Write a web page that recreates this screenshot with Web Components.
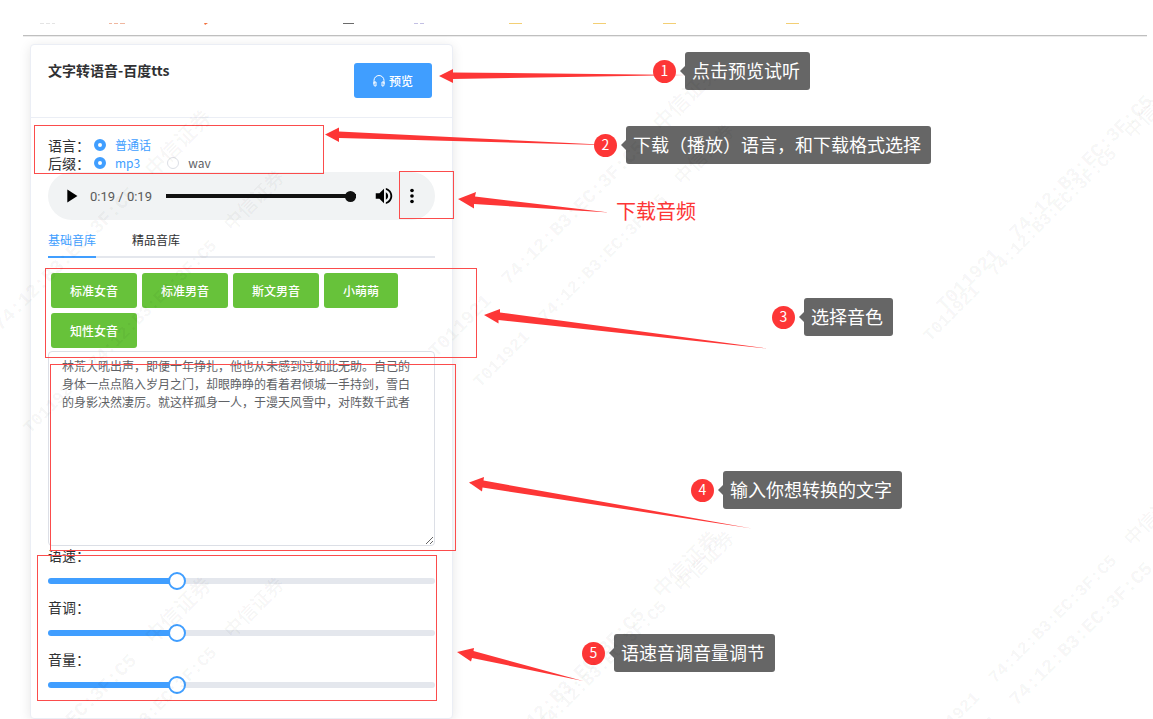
<!DOCTYPE html>
<html lang="zh-CN">
<head>
<meta charset="utf-8">
<meta name="viewport" content="width=device-width, initial-scale=1">
<title>文字转语音-百度tts</title>
<style>
  body {
    margin: 0;
    background: #fff;
    color: #303133;
    font-family: "Noto Sans CJK SC", sans-serif;
    font-size: 14px;
  }
</style>
</head>
<body>

<tts-page>
  <tts-card heading="文字转语音-百度tts">
    <tts-options></tts-options>
    <tts-player time="0:19 / 0:19"></tts-player>
    <voice-tabs tabs="基础音库,精品音库" voices="标准女音,标准男音,斯文男音,小萌萌,知性女音"></voice-tabs>
    <tts-text>林荒大吼出声，即便十年挣扎，他也从未感到过如此无助。自己的身体一点点陷入岁月之门，却眼睁睁的看着君倾城一手持剑，雪白的身影决然凄厉。就这样孤身一人，于漫天风雪中，对阵数千武者</tts-text>
    <tts-slider label="语速："></tts-slider>
    <tts-slider label="音调："></tts-slider>
    <tts-slider label="音量："></tts-slider>
  </tts-card>

  <guide-marks slot="guide"></guide-marks>
  <guide-pin slot="guide" step="1" style="left: 653px; top: 52px">点击预览试听</guide-pin>
  <guide-pin slot="guide" step="2" style="left: 594px; top: 126px">下载（播放）语言，和下载格式选择</guide-pin>
  <guide-pin slot="guide" step="3" style="left: 772px; top: 298px">选择音色</guide-pin>
  <guide-pin slot="guide" step="4" style="left: 691px; top: 471px">输入你想转换的文字</guide-pin>
  <guide-pin slot="guide" step="5" style="left: 582px; top: 634px">语速音调音量调节</guide-pin>
  <water-mark slot="guide"></water-mark>
</tts-page>

<script>
(function () {

  // ===== PAGE =====
  class TtsPage extends HTMLElement {

    constructor() {
      super();
      this.attachShadow({ mode: "open" }).innerHTML = `
        <style>
          :host {
            display: block;
            position: relative;
            min-height: 100vh;
            overflow: hidden;
            box-sizing: border-box;
            padding: 23px 6px 0 23px;
          }
          .strip {
            display: block;
            width: 100%;
            height: 12px;
          }
          main {
            border-top: 1px solid #bfbfbf;
            box-shadow: inset 0 1px #ececec;
            padding: 8px 7px 0;
          }
        </style>
        <svg class="strip" aria-hidden="true">
          <path d="M17 0.5h4m2 0h4m2 0h3" stroke="#e4e4e4"/>
          <path d="M86 0.5h3m2 0h4m2 0h5" stroke="#f0b7a0"/>
          <path d="M181 0h4l-3 2z" fill="#f2703d"/>
          <path d="M320 0.5h11" stroke="#6b6b6b"/>
          <path d="M391 0.5h4m2 0h4" stroke="#c3c0e4"/>
          <path d="M486 0.5h13m71 0h13m57 0h13m110 0h13" stroke="#f3cf74"/>
        </svg>
        <main><slot></slot></main>
        <slot name="guide"></slot>
      `;
    }

  }

  // ===== CARD =====
  class TtsCard extends HTMLElement {

    connectedCallback() {
      this.attachShadow({ mode: "open" }).innerHTML = `
        <style>
          :host {
            display: block;
            box-sizing: border-box;
            max-width: 423px;
            border: 1px solid #ebeef5;
            border-radius: 4px;
            box-shadow: 0 2px 12px rgba(0, 0, 0, 0.1);
            background: #fff;
          }
          header {
            display: flex;
            justify-content: space-between;
            align-items: flex-start;
            padding: 18px 20px 19px 17px;
            border-bottom: 1px solid #ebeef5;
          }
          h1 {
            margin: 0;
            font-size: 14px;
            line-height: 14px;
          }
          button {
            display: flex;
            align-items: center;
            gap: 4px;
            height: 35px;
            padding: 0 19px;
            border: 0;
            border-radius: 3px;
            background: #409eff;
            color: #fff;
            font: 500 12px "Noto Sans CJK SC", sans-serif;
          }
          .body {
            padding: 18px 17px 16px;
          }
        </style>
        <header>
          <h1>${this.getAttribute("heading")}</h1>
          <button type="button">
            <svg width="12" height="12" viewBox="0 0 12 12" fill="none" stroke="#fff" aria-hidden="true">
              <path d="M1 9V5.500a5 5 0 0 1 10 0V9"/>
              <path d="M1 7h2v4H2a1 1 0 0 1-1-1zM9 7h2v3a1 1 0 0 1-1 1H9z"/>
            </svg>
            预览
          </button>
        </header>
        <div class="body"><slot></slot></div>
      `;
    }

  }

  // ===== LANGUAGE AND FORMAT =====
  class TtsOptions extends HTMLElement {

    connectedCallback() {
      this.attachShadow({ mode: "open" }).innerHTML = `
        <style>
          :host { display: block; }
          .row {
            display: flex;
            align-items: center;
            height: 18px;
            line-height: 18px;
          }
          .name { margin-right: 4px; }
          label {
            display: flex;
            align-items: center;
            gap: 9px;
            margin-right: 27px;
            color: #606266;
            font-size: 12px;
          }
          label:has(:checked) { color: #409eff; }
          input {
            appearance: none;
            box-sizing: border-box;
            width: 12px;
            height: 12px;
            margin: 0;
            border: 1px solid #dcdfe6;
            border-radius: 50%;
            background: #fff;
          }
          input:checked { border: 4px solid #409eff; }
        </style>
        <div class="row" role="radiogroup" aria-labelledby="lang">
          <span class="name" id="lang">语言：</span>
          <label><input type="radio" name="lang" checked>普通话</label>
        </div>
        <div class="row" role="radiogroup" aria-labelledby="ext">
          <span class="name" id="ext">后缀：</span>
          <label><input type="radio" name="ext" checked>mp3</label>
          <label><input type="radio" name="ext">wav</label>
        </div>
      `;
    }

  }

  // ===== AUDIO BAR =====
  class TtsPlayer extends HTMLElement {

    connectedCallback() {
      this.attachShadow({ mode: "open" }).innerHTML = `
        <style>
          :host {
            display: flex;
            align-items: center;
            box-sizing: border-box;
            height: 48px;
            padding: 0 12px;
            border-radius: 24px;
            background: #f1f3f4;
            color: #5a5a5a;
            font-family: Roboto, sans-serif;
            font-size: 13px;
          }
          button {
            display: flex;
            padding: 0;
            border: 0;
            background: none;
          }
          svg { width: 22px; height: 22px; }
          .time { margin: 0 14px 0 8px; white-space: nowrap; }
          input {
            appearance: none;
            flex: 1;
            min-width: 0;
            height: 12px;
            margin: 0 17px 0 0;
            background: linear-gradient(#111, #111) center / 100% 4px no-repeat;
          }
          input::-webkit-slider-thumb {
            appearance: none;
            width: 11px;
            height: 11px;
            border-radius: 50%;
            background: #111;
          }
          .menu { margin-left: 6px; }
        </style>
        <button type="button" aria-label="播放">
          <svg viewBox="0 0 24 24"><path d="M8 5v14l11-7z"/></svg>
        </button>
        <span class="time">${this.getAttribute("time")}</span>
        <input type="range" min="0" max="19" value="19" aria-label="进度">
        <button type="button" aria-label="静音">
          <svg viewBox="0 0 24 24"><path d="M3 9v6h4l5 5V4L7 9H3zm13.500 3c0-1.770-1.020-3.290-2.500-4.030v8.050c1.480-.73 2.500-2.250 2.500-4.020zM14 3.230v2.060c2.890.86 5 3.540 5 6.710s-2.110 5.850-5 6.710v2.060c4.010-.91 7-4.490 7-8.770s-2.990-7.860-7-8.770z"/></svg>
        </button>
        <button class="menu" type="button" aria-label="更多">
          <svg viewBox="0 0 24 24"><circle cx="12" cy="6" r="2"/><circle cx="12" cy="12" r="2"/><circle cx="12" cy="18" r="2"/></svg>
        </button>
      `;
    }

  }

  // ===== VOICES =====
  class VoiceTabs extends HTMLElement {

    connectedCallback() {
      this.attachShadow({ mode: "open" });
      this.render();
    }

    list(name) {
      return this.getAttribute(name).split(",");
    }

    createTab(name, index) {
      return `<button type="button" role="tab" aria-selected="${index === 0}">${name}</button>`;
    }

    createVoice(name) {
      return `<button type="button">${name}</button>`;
    }

    render() {
      this.shadowRoot.innerHTML = `
        <style>
          :host { display: block; padding: 2px 0 3px; }
          button {
            border: 0;
            font: 12px "Noto Sans CJK SC", sans-serif;
          }
          .tabs {
            display: flex;
            gap: 36px;
            height: 36px;
            box-shadow: inset 0 -2px #e4e7ed;
          }
          .tabs button {
            padding: 0;
            border-bottom: 2px solid transparent;
            background: none;
            color: #303133;
          }
          .tabs [aria-selected="true"] {
            border-color: #409eff;
            color: #409eff;
          }
          .voices {
            display: flex;
            flex-wrap: wrap;
            gap: 5px;
            padding: 15px 3px 0;
          }
          .voices button {
            height: 35px;
            padding: 0 19px;
            border-radius: 3px;
            background: #67c23a;
            color: #fff;
            font-weight: 500;
          }
        </style>
        <div class="tabs" role="tablist">${this.list("tabs").map(this.createTab).join("")}</div>
        <div class="voices">${this.list("voices").map(this.createVoice).join("")}</div>
      `;
    }

  }

  // ===== TEXT BOX =====
  class TtsText extends HTMLElement {

    connectedCallback() {
      this.attachShadow({ mode: "open" }).innerHTML = `
        <style>
          :host { display: block; }
          textarea {
            display: block;
            box-sizing: border-box;
            width: 100%;
            height: 195px;
            padding: 5px 16px 5px 13px;
            border: 1px solid #dcdfe6;
            border-radius: 4px;
            outline: 0;
            background: #fff;
            color: #606266;
            font: 12px/18px "Noto Sans CJK SC", sans-serif;
            resize: vertical;
          }
        </style>
        <textarea aria-label="文字"></textarea>
      `;
      this.shadowRoot.querySelector("textarea").value = this.textContent.trim();
    }

  }

  // ===== SLIDER =====
  class TtsSlider extends HTMLElement {

    connectedCallback() {
      this.attachShadow({ mode: "open" }).innerHTML = `
        <style>
          :host { display: block; }
          label { display: block; line-height: 18px; }
          input {
            appearance: none;
            display: block;
            width: 100%;
            height: 6px;
            margin: 14px 0;
            border-radius: 3px;
            background: linear-gradient(#409eff, #409eff) 0 / 33% 100% no-repeat #e4e7ed;
          }
          input::-webkit-slider-thumb {
            appearance: none;
            box-sizing: border-box;
            width: 18px;
            height: 18px;
            border: 2px solid #409eff;
            border-radius: 50%;
            background: #fff;
          }
        </style>
        <label for="range">${this.getAttribute("label")}</label>
        <input id="range" type="range" min="0" max="40" value="13">
      `;
    }

  }

  // ===== GUIDE: frames, arrows and the red caption =====
  class GuideMarks extends HTMLElement {

    connectedCallback() {
      this.attachShadow({ mode: "open" }).innerHTML = `
        <style>
          :host {
            position: absolute;
            inset: 0;
            pointer-events: none;
          }
          svg { display: block; width: 100%; height: 100%; }
          .frames { fill: none; stroke: #fb4c4c; shape-rendering: crispEdges; }
          .arrows, text { fill: #fd3636; }
          text { font-size: 20px; }
        </style>
        <svg>
          <g class="frames">
            <rect x="34.500" y="125.500" width="289" height="48"/>
            <rect x="399.500" y="171.500" width="54" height="47"/>
            <rect x="45.500" y="268.500" width="431" height="89"/>
            <rect x="50.500" y="364.500" width="405" height="186"/>
            <rect x="37.500" y="555.500" width="399" height="145"/>
          </g>
          <g class="arrows">
            <path d="M439 76l14-7v3.500L686 75 453 79v4z"/>
            <path d="M325 134.500l14-7v4L620 145.500 339 138v4z"/>
            <path d="M458 199l18-7-1 4.500L609 212.500 474 204v4.500z"/>
            <path d="M484 315l16-6v3.500L767 348.500 498.500 320v3.500z"/>
            <path d="M469 482.500l15-5.500-.5 3.500L752 528.500 482.500 487.500l-.5 4z"/>
            <path d="M457 652l17-4-.5 3L583 681 472 658l-1 3.500z"/>
          </g>
          <text x="616" y="219">下载音频</text>
        </svg>
      `;
    }

  }

  // ===== GUIDE: numbered callout =====
  class GuidePin extends HTMLElement {

    connectedCallback() {
      this.attachShadow({ mode: "open" }).innerHTML = `
        <style>
          :host {
            position: absolute;
            display: flex;
            align-items: center;
            gap: 4px;
            color: #fff;
            white-space: nowrap;
          }
          .step {
            width: 23px;
            height: 23px;
            border-radius: 50%;
            background: #fd3636;
            font-size: 14px;
            line-height: 21px;
            text-align: center;
          }
          .tip { display: flex; align-items: center; }
          .tip::before {
            content: "";
            border: 5px solid transparent;
            border-left: 0;
            border-right-color: #666;
          }
          .text {
            padding: 0 10px 2px 7px;
            border-radius: 3px;
            background: #666;
            font-size: 18px;
            line-height: 36px;
          }
        </style>
        <span class="step">${this.getAttribute("step")}</span>
        <span class="tip"><span class="text"><slot></slot></span></span>
      `;
    }

  }

  // ===== WATERMARK =====
  // two tilted layers, each repeats on its own grid
  class WaterMark extends HTMLElement {

    connectedCallback() {
      this.attachShadow({ mode: "open" }).innerHTML = `
        <style>
          :host {
            position: absolute;
            inset: 0;
            pointer-events: none;
          }
          svg { display: block; width: 100%; height: 100%; }
          text {
            fill: rgba(0, 0, 0, 0.05);
            font-family: "Liberation Mono", monospace;
            font-weight: bold;
            white-space: pre;
          }
          tspan { font-family: "Noto Sans CJK SC", sans-serif; font-weight: 500; }
          .large { font-size: 19px; }
          .large tspan { font-size: 21px; }
          .small { font-size: 17px; }
          .small tspan { font-size: 19px; }
        </style>
        <svg aria-hidden="true">
          ${this.createLayer("large", -72, 404, 508, 467)}
          ${this.createLayer("small", 30, 434, 450, 407)}
        </svg>
      `;
    }

    createLayer(name, left, top, stepX, stepY) {
      const marks = [];
      for (let row = 0; row < 2; row++) {
        for (let col = 0; col < 3; col++) {
          const x = left + col * stepX;
          const y = top + row * stepY - col * 46;
          marks.push(`<text class="${name}" transform="translate(${x} ${y}) rotate(-45)">T011921  74:12:B3:EC:3F:C5  <tspan>中信证券</tspan></text>`);
        }
      }
      return marks.join("");
    }

  }

  customElements.define("tts-page", TtsPage);
  customElements.define("tts-card", TtsCard);
  customElements.define("tts-options", TtsOptions);
  customElements.define("tts-player", TtsPlayer);
  customElements.define("voice-tabs", VoiceTabs);
  customElements.define("tts-text", TtsText);
  customElements.define("tts-slider", TtsSlider);
  customElements.define("guide-marks", GuideMarks);
  customElements.define("guide-pin", GuidePin);
  customElements.define("water-mark", WaterMark);

})();
</script>
</body>
</html>
